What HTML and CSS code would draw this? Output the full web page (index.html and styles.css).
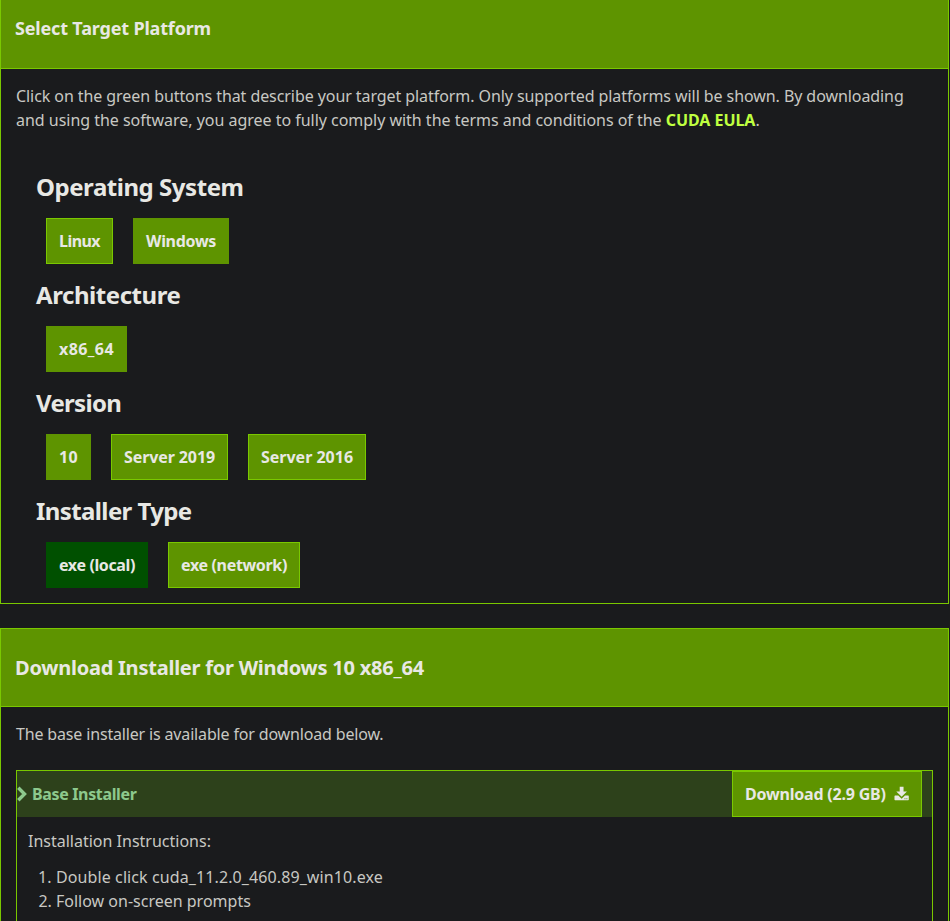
FILE: index.html
```html
<!DOCTYPE html>
<html lang="en">
<head>
<meta charset="utf-8">
<title>CUDA Toolkit Downloads</title>
<link rel="stylesheet" href="styles.css">
</head>
<body>
<section class="panel panel-target">
  <header class="panel-head"><h4>Select Target Platform</h4></header>
  <p class="intro"><span class="line-one">Click on the green buttons that describe your target platform. Only supported platforms will be shown. By downloading</span><br><span class="line-two">and using the software, you agree to fully comply with the terms and conditions of the <a class="eula">CUDA EULA</a>.</span></p>
  <div class="options">
    <h3 class="os">Operating System</h3>
    <div class="row"><button class="btn linux">Linux</button><button class="btn selected windows">Windows</button></div>
    <h3 class="architecture">Architecture</h3>
    <div class="row"><button class="btn selected x86">x86_64</button></div>
    <h3 class="version">Version</h3>
    <div class="row"><button class="btn selected win10">10</button><button class="btn server2019">Server 2019</button><button class="btn server2016">Server 2016</button></div>
    <h3 class="installer-type">Installer Type</h3>
    <div class="row"><button class="btn active local">exe (local)</button><button class="btn network">exe (network)</button></div>
  </div>
</section>
<section class="panel panel-download">
  <header class="panel-head"><h3>Download Installer for Windows 10 x86_64</h3></header>
  <p class="available">The base installer is available for download below.</p>
  <div class="installer">
    <div class="bar">
      <svg class="chevron" viewBox="0 0 11 16"><path d="M1.3 1.8 7.5 8 1.3 14.2" fill="none" stroke="currentColor" stroke-width="3.4"/></svg>
      <strong>Base Installer</strong>
      <button class="btn download"><span>Download (2.9 GB)</span><svg class="download-icon" viewBox="0 0 16 16"><path fill="currentColor" d="M6 .5h4v5h3.6L8 11 2.4 5.5H6zM1.2 9.7h3.3L8 12.9l3.500-3.200h3.300q.7 0 .7.7v3.400q0 .7-.7.7H1.200q-.7 0-.7-.7v-3.400q0-.7.7-.7z"/><path fill="#5e9400" d="M11 12.400h1v1h-1zM13 12.400h1v1h-1z"/></svg></button>
    </div>
    <div class="steps">
      <p>Installation Instructions:</p>
      <ol><li class="run">Double click cuda_11.2.0_460.89_win10.exe</li><li>Follow on-screen prompts</li></ol>
    </div>
  </div>
</section>
</body>
</html>
```
FILE: styles.css
```css
* { box-sizing: border-box; }
body {
  margin: 0;
  background: #1a1b1d;
  color: #c8c8c3;
  font: 16px/24px "Noto Sans", sans-serif;
}
h3, h4, p, ol { margin: 0; }
h3, h4 { color: #e8e8e4; font-weight: 700; }

.panel { width: 949px; border: 1px solid #7ac800; }
.panel-target { height: 604px; border-top: 0; }
.panel-download { height: 293px; margin-top: 24px; border-bottom: 0; }
.panel-head {
  display: flex;
  align-items: center;
  padding: 0 14px;
  background: #5e9400;
  border-bottom: 1px solid #7ac800;
}
.panel-target .panel-head { height: 69px; padding-bottom: 12px; }
.panel-download .panel-head { height: 78px; }
.panel-head h4 { font-size: 18px; letter-spacing: -.17px; }
.panel-head h3 { font-size: 20px; letter-spacing: -.23px; }

.intro { padding: 15px 14px 0 15px; white-space: nowrap; }
.line-one { letter-spacing: -.075px; }
.line-two { letter-spacing: -.023px; }
.eula { color: #bfff40; font-weight: 700; letter-spacing: -.05px; }

.options { padding: 39px 35px 0; }
.options h3 { font-size: 24px; line-height: 32px; margin-bottom: 15px; }
.options .os { letter-spacing: -.46px; }
.options .architecture { letter-spacing: -.44px; }
.options .version { letter-spacing: -.7px; }
.options .installer-type { letter-spacing: -.6px; }
.row { display: flex; gap: 20px; margin: 0 10px 15px; }

.btn {
  height: 46px;
  padding: 0;
  border: 1px solid #7ac800;
  background: #5e9400;
  color: #e8e8e4;
  font: 700 16px/24px "Noto Sans", sans-serif;
  white-space: nowrap;
}
.selected { border-color: #5e9400; }
.active { background: #005000; border-color: #005000; }
.linux { width: 67px; letter-spacing: -.6px; }
.windows { width: 96px; letter-spacing: -.31px; }
.x86 { width: 81px; letter-spacing: .43px; }
.win10 { width: 45px; letter-spacing: .35px; }
.server2019 { width: 117px; letter-spacing: -.1px; }
.server2016 { width: 118px; }
.local { width: 102px; letter-spacing: -.37px; }
.network { width: 132px; letter-spacing: -.34px; }

.available { padding: 15px 15px 0; letter-spacing: -.16px; }
.installer { width: 917px; height: 151px; margin: 24px 0 0 15px; border: 1px solid #7ac800; border-bottom: 0; }
.bar { display: flex; align-items: center; height: 46px; background: #2d411b; color: #8dc98d; }
.chevron { width: 11px; height: 16px; margin-right: 4px; }
.bar strong { letter-spacing: -.35px; }
.download {
  display: flex;
  align-items: center;
  width: 190px;
  margin: 0 10px 0 auto;
  padding: 0 12px;
  letter-spacing: -.2px;
}
.download-icon { width: 16px; height: 16px; margin-left: 8px; }
.steps { padding: 12px 11px 0; }
.steps ol { margin-top: 12px; padding-left: 28px; }
.run { letter-spacing: .1px; }
```
